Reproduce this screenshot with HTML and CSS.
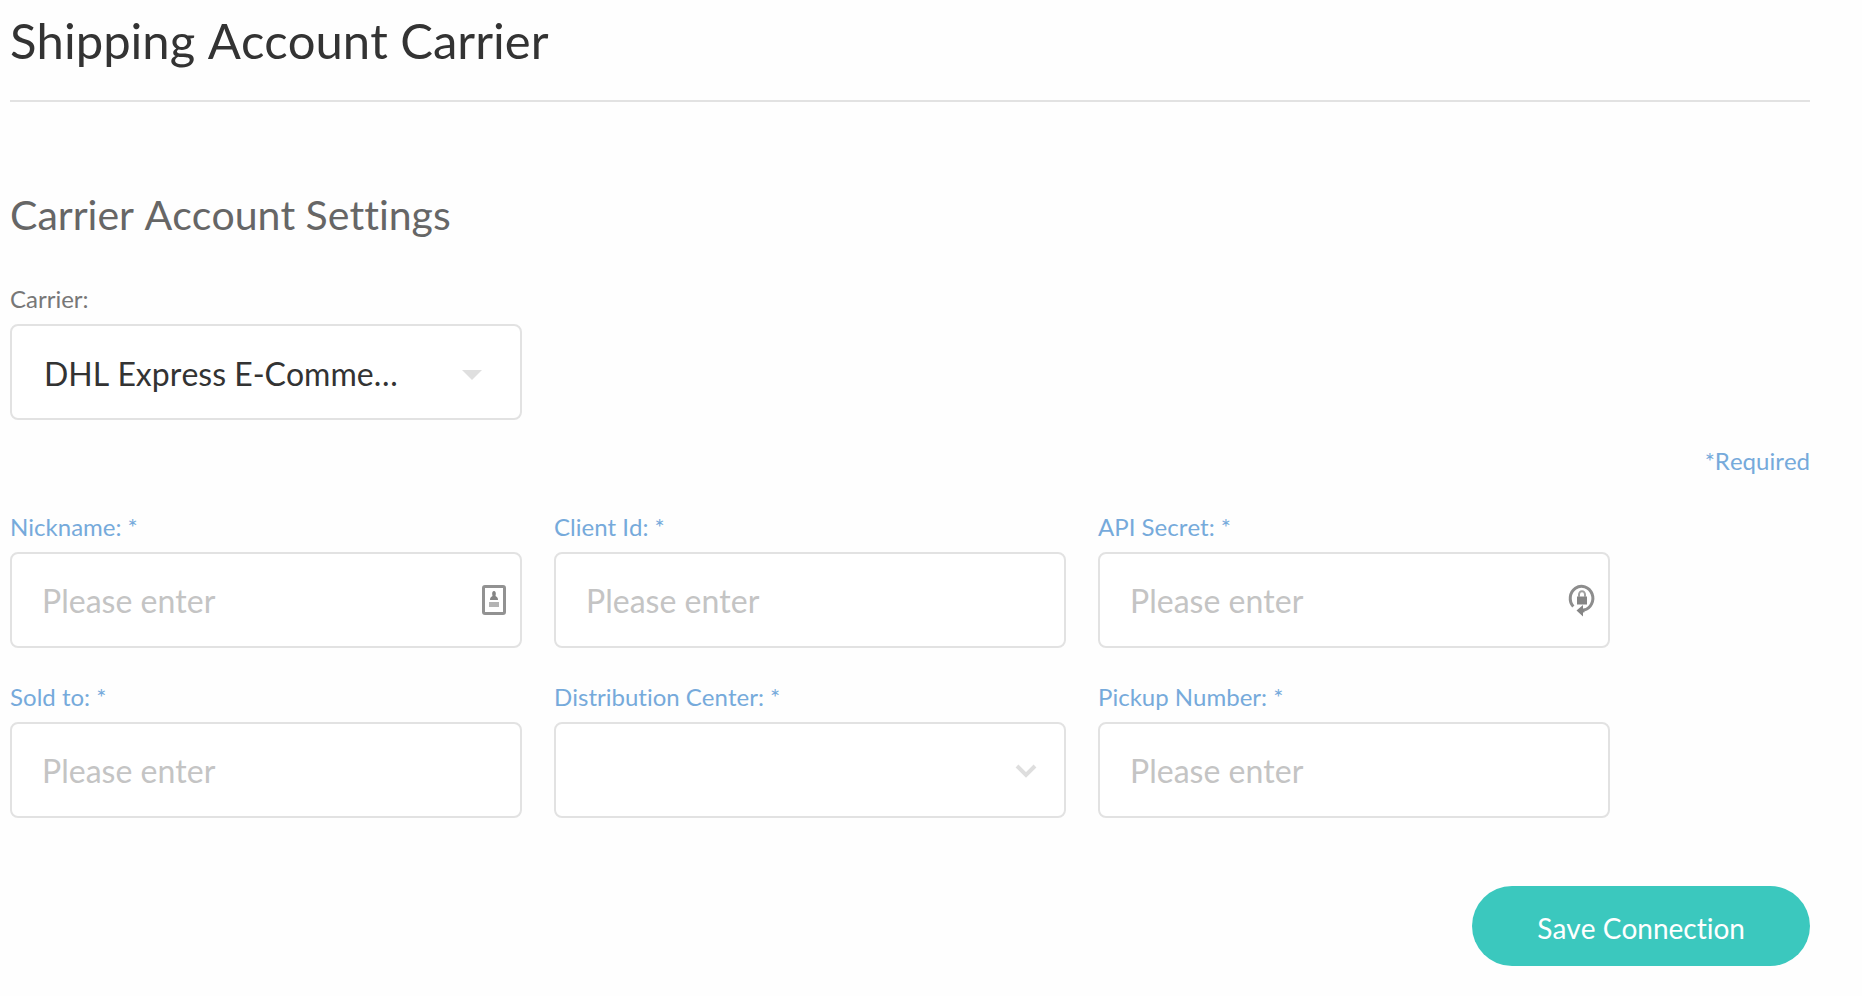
FILE: index.html
```html
<!DOCTYPE html>
<html lang="en">
<head>
<meta charset="utf-8">
<title>Shipping Account Carrier</title>
<link rel="stylesheet" href="styles.css">
</head>

<body>

<h1>Shipping Account Carrier</h1>

<form class="settings">
<h2>Carrier Account Settings</h2>

<div class="fields">
	<div class="field">
		<label for="carrier">Carrier:</label>
		<div class="control">
			<select id="carrier" class="carrier">
				<option>DHL Express E-Commerce</option>
			</select>
			<svg class="icon caret" width="20" height="16" viewBox="0 0 20 16"><path d="M0 6h20L10 16z" fill="#dfdfdf"/></svg>
		</div>
	</div>
</div>

<p class="note">*Required</p>

<div class="fields required">
	<div class="field">
		<label for="nickname">Nickname: *</label>
		<div class="control">
			<input type="text" id="nickname" placeholder="Please enter">
			<svg class="icon fill" width="28" height="34" viewBox="0 0 28 34">
				<rect x="3.5" y="3.5" width="21" height="27" rx="1.5" fill="none" stroke="#929292" stroke-width="3"/>
				<path d="M14 8c1.400 0 2 1.300 1.800 3.300l-.3 1.700c1.600.8 2.500 1.800 2.500 4h-8c0-2.200.9-3.200 2.500-4l-.3-1.700c-.2-2 .4-3.300 1.800-3.300z" fill="#858585"/>
				<path d="M9 19h10v5H9z" fill="#b4b4b4"/>
			</svg>
		</div>
	</div>

	<div class="field">
		<label for="client">Client Id: *</label>
		<div class="control">
			<input type="text" id="client" placeholder="Please enter">
		</div>
	</div>

	<div class="field">
		<label for="secret">API Secret: *</label>
		<div class="control">
			<input type="password" id="secret" placeholder="Please enter">
			<svg class="icon fill" width="28" height="34" viewBox="0 0 28 34">
				<path d="M5.300 23.500A11.300 12 0 1 1 16 27" fill="none" stroke="#8d8d8d" stroke-width="3"/>
				<path d="M8.500 27.500l6.500-5.500v3.500l1.500.2v3.500l-1.500.3v4z" fill="#858585"/>
				<path d="M9 13.500h10v8H9z" fill="#858585"/>
				<path d="M11 14v-2.500a3 3.300 0 0 1 6 0V14" fill="none" stroke="#a0a0a0" stroke-width="2"/>
			</svg>
		</div>
	</div>

	<div class="field">
		<label for="sold">Sold to: *</label>
		<div class="control">
			<input type="text" id="sold" placeholder="Please enter">
		</div>
	</div>

	<div class="field">
		<label for="center">Distribution Center: *</label>
		<div class="control">
			<select id="center">
				<option></option>
			</select>
			<svg class="icon chevron" width="24" height="16" viewBox="0 0 24 16"><path d="M3 4l9 9 9-9" fill="none" stroke="#dedede" stroke-width="4"/></svg>
		</div>
	</div>

	<div class="field">
		<label for="pickup">Pickup Number: *</label>
		<div class="control">
			<input type="text" id="pickup" placeholder="Please enter">
		</div>
	</div>
</div>

<div class="actions">
	<button type="submit" class="save">Save Connection</button>
</div>
</form>

</body>
</html>
```
FILE: styles.css
```css
* { box-sizing: border-box; }

body {
	margin: 0;
	padding: 10px 52px 30px 10px;
	background-color: #fefefe;
	color: #333;
	font-family: Lato, sans-serif;
	font-kerning: none;
	font-variant-ligatures: none;
}

h1 {
	margin: 0;
	padding-bottom: 30px;
	border-bottom: 2px solid #e2e2e2;
	font-size: 49px;
	font-weight: normal;
	line-height: 60px;
}

h2 {
	margin: 89px 0 45px;
	color: #666;
	font-size: 41px;
	font-weight: normal;
	line-height: 48px;
}

/* three columns, with free space kept at the right */
.fields {
	display: grid;
	grid-template-columns: repeat(3, 1fr);
	gap: 34px 32px;
	padding-right: 200px;
}

label {
	display: block;
	margin-bottom: 10px;
	color: #777;
	font-size: 24px;
	line-height: 30px;
}

.required label, .note { color: #76aadb; }

.note {
	margin: 26px 0 36px;
	font-size: 24px;
	line-height: 30px;
	text-align: right;
}

.control { position: relative; }

input, select {
	display: block;
	width: 100%;
	height: 96px;
	padding: 0 30px;
	border: 2px solid #e2e2e2;
	border-radius: 8px;
	background-color: #fff;
	color: #333;
	font-family: inherit;
	font-size: 32px;
	font-kerning: inherit;
	font-variant-ligatures: inherit;
	appearance: none;
}

input::placeholder { color: #c4c4c4; }

.carrier {
	padding: 3px 118px 0 32px;
	text-overflow: ellipsis;
}

/* marks drawn over the right end of a control */
.icon {
	position: absolute;
	top: 0;
	bottom: 0;
	margin: auto 0;
	pointer-events: none;
}

.caret { right: 40px; }
.chevron { right: 28px; }
.fill { right: 14px; }

.actions {
	display: flex;
	justify-content: flex-end;
	margin-top: 68px;
}

.save {
	height: 80px;
	padding: 3px 65px 0;
	border: 0;
	border-radius: 40px;
	background-color: #3bc8be;
	color: #fff;
	font-family: inherit;
	font-size: 28px;
	font-kerning: inherit;
	font-variant-ligatures: inherit;
}
```
